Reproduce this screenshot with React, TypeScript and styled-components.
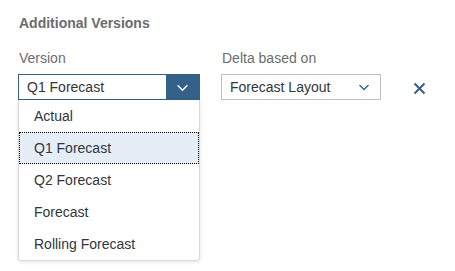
import React, { FC } from "react";
import styled, { createGlobalStyle } from "styled-components";

const GlobalStyle = createGlobalStyle`
  html, body {
    margin: 0;
    padding: 0;
    background: #ffffff;
  }
  body {
    font-family: "Liberation Sans", Arial, sans-serif;
    color: #32363a;
  }
`;

const Page = styled.div`
  width: 455px;
  height: 271px;
  padding: 15px 0 0 18px;
  box-sizing: border-box;
`;

const Title = styled.div`
  font-size: 14px;
  font-weight: bold;
  color: #6a6d70;
  line-height: 16px;
  padding-left: 1px;
`;

const Row = styled.div`
  display: flex;
  align-items: flex-end;
  margin-top: 19px;
`;

const Field = styled.div<{ width: number; offset?: number }>`
  position: relative;
  width: ${({ width }) => width}px;
  margin-left: ${({ offset }) => offset || 0}px;
`;

const Label = styled.div`
  font-size: 14px;
  color: #6a6d70;
  line-height: 16px;
  padding-left: 1px;
  margin-bottom: 8px;
`;

const Select = styled.div<{ open?: boolean }>`
  display: flex;
  align-items: center;
  height: 26px;
  box-sizing: border-box;
  border: 1px solid ${({ open }) => (open ? "#346187" : "#bfbfbf")};
  background: #fff;
  font-size: 14px;
  color: #32363a;
`;

const Value = styled.div`
  flex: 1;
  padding-left: 8px;
  white-space: nowrap;
`;

const Arrow = styled.div<{ open?: boolean }>`
  width: ${({ open }) => (open ? 33 : 32)}px;
  height: 100%;
  display: flex;
  align-items: center;
  justify-content: center;
  background: ${({ open }) => (open ? "#346187" : "transparent")};
  color: ${({ open }) => (open ? "#ffffff" : "#346187")};
`;

const CloseButton = styled.div`
  width: 14px;
  height: 14px;
  margin-left: 31px;
  margin-bottom: 5px;
  display: flex;
  align-items: center;
  justify-content: center;
  color: #346187;
`;

const Popover = styled.div`
  position: absolute;
  left: 0;
  top: 100%;
  width: 182px;
  box-sizing: border-box;
  background: #fff;
  border: 1px solid #d9d9d9;
  border-top: none;
  border-radius: 0 0 4px 4px;
  box-shadow: 0 1px 4px rgba(0, 0, 0, 0.12);
  overflow: hidden;
`;

const Item = styled.div<{ selected?: boolean }>`
  height: 32px;
  display: flex;
  align-items: center;
  padding-left: 15px;
  font-size: 14px;
  color: #32363a;
  box-sizing: border-box;
  background: ${({ selected }) => (selected ? "#e5edf6" : "#fff")};
  outline: ${({ selected }) => (selected ? "1px dotted #000" : "none")};
  outline-offset: -1px;
`;

const Chevron: FC<{ size?: number }> = ({ size = 12 }) => (
  <svg width={size} height={size} viewBox="0 0 12 12" fill="none">
    <path d="M1.5 4 L6 8.5 L10.5 4" stroke="currentColor" strokeWidth="1.3" />
  </svg>
);

const versions = ["Actual", "Q1 Forecast", "Q2 Forecast", "Forecast", "Rolling Forecast"];

export default function App() {
  return (
    <>
      <GlobalStyle />
      <Page>
        <Title>Additional Versions</Title>
        <Row>
          <Field width={182}>
            <Label>Version</Label>
            <Select open>
              <Value>Q1 Forecast</Value>
              <Arrow open>
                <Chevron size={13} />
              </Arrow>
            </Select>
            <Popover>
              {versions.map((v) => (
                <Item key={v} selected={v === "Q1 Forecast"}>
                  {v}
                </Item>
              ))}
            </Popover>
          </Field>
          <Field width={160} offset={21}>
            <Label>Delta based on</Label>
            <Select>
              <Value>Forecast Layout</Value>
              <Arrow>
                <Chevron />
              </Arrow>
            </Select>
          </Field>
          <CloseButton>
            <svg width="13" height="13" viewBox="0 0 13 13">
              <path d="M1.5 1.5 L11.5 11.5 M11.5 1.5 L1.5 11.5" stroke="currentColor" strokeWidth="2" />
            </svg>
          </CloseButton>
        </Row>
      </Page>
    </>
  );
}
